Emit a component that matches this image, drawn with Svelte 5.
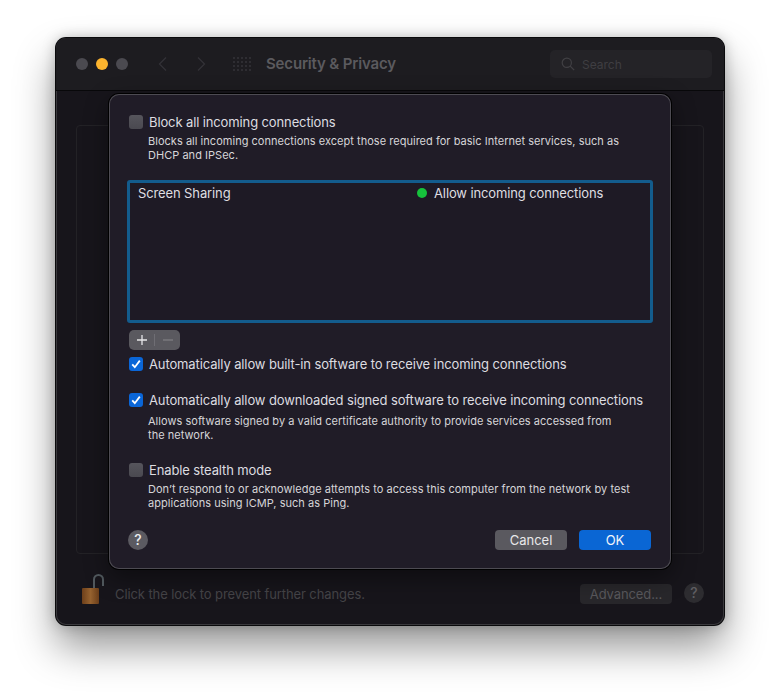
<script>
  const dots = Array.from({ length: 20 });
</script>

<div class="page">
  <div class="window">
    <header class="titlebar">
      <div class="lights">
        <span class="light"></span>
        <span class="light amber"></span>
        <span class="light"></span>
      </div>
      <svg class="chev" width="10" height="16" viewBox="0 0 10 16"><path d="M8 1.5 1.5 8 8 14.500" /></svg>
      <svg class="chev fwd" width="10" height="16" viewBox="0 0 10 16"><path d="M2 1.500 8.500 8 2 14.500" /></svg>
      <div class="grid-icon">
        {#each dots as _}<i></i>{/each}
      </div>
      <h1>Security &amp; Privacy</h1>
      <div class="search">
        <svg width="14" height="14" viewBox="0 0 14 14"><circle cx="5.800" cy="5.800" r="4.600" /><path d="m9.200 9.200 4 4" /></svg>
        <span>Search</span>
      </div>
    </header>

    <div class="body">
      <div class="panel"></div>
      <footer class="bottom">
        <svg class="lock" width="24" height="32" viewBox="0 0 24 32">
          <defs>
            <linearGradient id="brass" x1="0" x2="1" y1="0" y2="0">
              <stop offset="0" stop-color="#6d3f1a" />
              <stop offset="0.5" stop-color="#96622f" />
              <stop offset="1" stop-color="#6a3d19" />
            </linearGradient>
          </defs>
          <path class="shackle" d="M14 15V6.500a4.500 4.500 0 0 1 9 0V13" />
          <rect x="2" y="15" width="17" height="16" rx="1" fill="url(#brass)" />
        </svg>
        <span class="lock-text">Click the lock to prevent further changes.</span>
        <span class="advanced">Advanced...</span>
        <span class="help-dim">?</span>
      </footer>
    </div>

    <section class="sheet">
      <div class="check-row">
        <span class="box"></span>
        <span class="label">Block all incoming connections</span>
      </div>
      <p class="note">Blocks all incoming connections except those required for basic Internet services, such as<br />DHCP and IPSec.</p>

      <div class="list">
        <span class="app-name">Screen Sharing</span>
        <span class="status"><i class="dot"></i>Allow incoming connections</span>
      </div>

      <div class="stepper">
        <span class="plus"><svg width="12" height="12" viewBox="0 0 12 12"><path d="M6 1v10M1 6h10" /></svg></span>
        <span class="sep"></span>
        <span class="minus"><svg width="12" height="12" viewBox="0 0 12 12"><path d="M1 6h10" /></svg></span>
      </div>

      <div class="check-row first">
        <span class="box on"><svg width="14" height="14" viewBox="0 0 14 14"><path d="m3.200 7.400 2.600 2.800 5-6.600" /></svg></span>
        <span class="label">Automatically allow built-in software to receive incoming connections</span>
      </div>

      <div class="check-row second">
        <span class="box on"><svg width="14" height="14" viewBox="0 0 14 14"><path d="m3.200 7.400 2.600 2.800 5-6.600" /></svg></span>
        <span class="label">Automatically allow downloaded signed software to receive incoming connections</span>
      </div>
      <p class="note wide">Allows software signed by a valid certificate authority to provide services accessed from<br />the network.</p>

      <div class="check-row third">
        <span class="box"></span>
        <span class="label">Enable stealth mode</span>
      </div>
      <p class="note">Don’t respond to or acknowledge attempts to access this computer from the network by test<br />applications using ICMP, such as Ping.</p>

      <div class="actions">
        <span class="help">?</span>
        <button class="btn cancel">Cancel</button>
        <button class="btn ok">OK</button>
      </div>
    </section>
  </div>
</div>

<style>
  :global(body) {
    margin: 0;
    background: #fff;
  }
  .page {
    width: 780px;
    height: 699px;
    box-sizing: border-box;
    padding: 38px 56px 74px;
    font-family: Inter, "Liberation Sans", sans-serif;
    overflow: hidden;
  }
  .window {
    position: relative;
    height: 587px;
    box-sizing: border-box;
    display: flex;
    flex-direction: column;
    background: #17151b;
    border-radius: 10px;
    box-shadow: 0 0 0 1px #0a0a0c, inset 0 0 0 1px #3a393d, 0 22px 40px rgba(0, 0, 0, 0.42), 0 0 14px rgba(0, 0, 0, 0.25);
  }
  .titlebar {
    height: 53px;
    flex: none;
    box-sizing: border-box;
    display: flex;
    align-items: center;
    padding: 0 12px 0 20px;
    background: #1d1c20;
    border-bottom: 1px solid #08080a;
    border-radius: 10px 10px 0 0;
  }
  .lights {
    display: flex;
    gap: 8px;
  }
  .light {
    width: 12px;
    height: 12px;
    border-radius: 50%;
    background: #4b4a50;
  }
  .light.amber {
    background: #fcb42e;
  }
  .chev {
    fill: none;
    stroke: #333237;
    stroke-width: 1.300;
    margin: -1px 0 0 30px;
  }
  .chev.fwd {
    margin-left: 28px;
  }
  .grid-icon {
    display: grid;
    grid-template-columns: repeat(5, 2px);
    gap: 2px;
    margin: -1px 0 0 27px;
  }
  .grid-icon i {
    width: 2px;
    height: 2px;
    background: #343338;
    border-radius: 50%;
  }
  h1 {
    margin: -2px 0 0 15px;
    font-size: 15px;
    font-weight: 600;
    letter-spacing: -0.16px;
    color: #5b5a5e;
  }
  .search {
    margin-left: auto;
    width: 162px;
    height: 28px;
    box-sizing: border-box;
    padding-left: 11px;
    display: flex;
    align-items: center;
    gap: 7px;
    background: #242327;
    border-radius: 5px;
    color: #3f3e42;
    font-size: 12px;
  }
  .search svg {
    fill: none;
    stroke: #414044;
    stroke-width: 1.200;
  }
  .body {
    flex: 1;
    display: flex;
    flex-direction: column;
    padding: 34px 20px 0;
  }
  .panel {
    height: 429px;
    box-sizing: border-box;
    border: 1px solid #232226;
    border-radius: 4px;
  }
  .bottom {
    flex: 1;
    display: flex;
    align-items: center;
    padding-top: 8px;
  }
  .lock {
    margin-left: 4px;
    margin-top: -10px;
  }
  .shackle {
    fill: none;
    stroke: #51595e;
    stroke-width: 2;
  }
  .lock-text {
    margin-left: 11px;
    font-size: 13px;
    letter-spacing: -0.1px;
    color: #454448;
  }
  .advanced {
    margin-left: auto;
    width: 92px;
    height: 20px;
    line-height: 20px;
    text-align: center;
    font-size: 13px;
    letter-spacing: -0.1px;
    color: #59585c;
    background: #28272b;
    border-radius: 4px;
  }
  .help-dim {
    margin: -2px 0 0 12px;
    width: 20px;
    height: 20px;
    line-height: 20px;
    text-align: center;
    border-radius: 50%;
    background: #2d2c30;
    color: #5f5e62;
    font-size: 14px;
    font-weight: 500;
  }
  .sheet {
    position: absolute;
    left: 53px;
    top: 56px;
    width: 562px;
    height: 475px;
    box-sizing: border-box;
    padding: 19px 20px 0;
    background: #201c27;
    border-radius: 10px;
    box-shadow: 0 0 0 1px #000, inset 0 0 0 1px #4d4b52, 0 8px 24px rgba(0, 0, 0, 0.45);
    color: #dfdee0;
  }
  .check-row {
    display: flex;
    align-items: center;
    gap: 6px;
    height: 18px;
    font-size: 13px;
    line-height: 18px;
    letter-spacing: -0.12px;
    color: #dddce0;
    white-space: nowrap;
  }
  .check-row.first {
    margin-top: 5px;
  }
  .check-row.second {
    margin-top: 18px;
  }
  .check-row.third {
    margin-top: 19px;
  }
  .box {
    flex: none;
    width: 14px;
    height: 14px;
    border-radius: 3px;
    background: linear-gradient(#56555c, #4a4950);
    display: flex;
  }
  .box.on {
    background: #0a66d8;
  }
  .box svg {
    fill: none;
    stroke: #fff;
    stroke-width: 1.800;
  }
  .note {
    margin: 3px 0 0 19px;
    font-size: 11px;
    line-height: 14px;
    letter-spacing: 0.03px;
    color: #d6d5d8;
  }
  .note.wide {
    margin-top: 5px;
  }
  .list {
    margin: 18px 0 0 -2px;
    width: 526px;
    height: 143px;
    box-sizing: border-box;
    border: 3px solid #135c8d;
    border-radius: 3px;
    padding: 1px 8px;
    display: flex;
    align-items: flex-start;
    font-size: 13px;
    line-height: 18px;
    letter-spacing: -0.12px;
    color: #dfdee1;
    background: #1e1a25;
  }
  .app-name {
    width: 279px;
  }
  .status {
    display: flex;
    align-items: center;
  }
  .dot {
    width: 10px;
    height: 10px;
    border-radius: 50%;
    background: #16c23c;
    margin-right: 7px;
  }
  .stepper {
    margin-top: 7px;
    width: 51px;
    height: 20px;
    display: flex;
    align-items: center;
    background: #5a595f;
    border-radius: 5px;
  }
  .plus,
  .minus {
    width: 25px;
    display: flex;
    justify-content: center;
  }
  .stepper svg {
    fill: none;
    stroke: #e6e6e8;
    stroke-width: 1.300;
  }
  .minus svg {
    stroke: #7f7e83;
  }
  .sep {
    width: 1px;
    height: 12px;
    background: #6f6e74;
  }
  .actions {
    position: absolute;
    left: 19px;
    right: 20px;
    bottom: 19px;
    display: flex;
    align-items: center;
  }
  .help {
    width: 20px;
    height: 20px;
    line-height: 20px;
    text-align: center;
    border-radius: 50%;
    background: #5b5a61;
    color: #ececee;
    font-size: 14px;
    font-weight: 500;
    margin-right: auto;
  }
  .btn {
    width: 72px;
    height: 20px;
    padding: 0;
    border: none;
    border-radius: 4px;
    font: 13px Inter, "Liberation Sans", sans-serif;
    color: #e8e8ea;
  }
  .cancel {
    background: #5a595f;
    margin-right: 12px;
  }
  .ok {
    background: #0a66d4;
    color: #f2f5fa;
  }
</style>
